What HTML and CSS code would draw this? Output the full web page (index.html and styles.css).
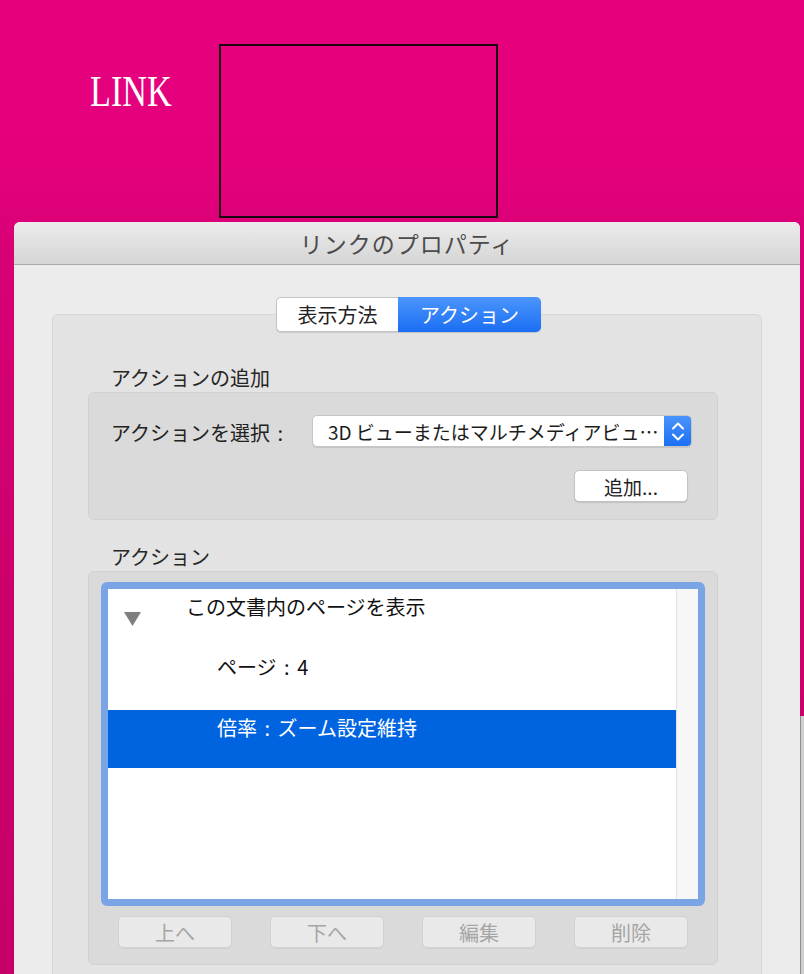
FILE: index.html
```html
<!DOCTYPE html>
<html lang="ja">
<head>
<meta charset="utf-8">
<title>リンクのプロパティ</title>
<link rel="stylesheet" href="styles.css">
</head>
<body>
<div class="stage">
  <div class="link-label">LINK</div>
  <div class="link-rect"></div>
</div>
<div class="side-strip"></div>
<div class="window">
  <div class="titlebar">リンクのプロパティ</div>
  <div class="window-body">
    <div class="panel">
      <div class="tabs">
        <div class="tab">表示方法</div>
        <div class="tab active">アクション</div>
      </div>
      <div class="group-label">アクションの追加</div>
      <div class="group add-group">
        <div class="select-row">
          <div class="select-label">アクションを選択 <span class="colon">:</span></div>
          <div class="select">
            <span class="select-text">3D ビューまたはマルチメディアビュ…</span>
            <span class="stepper">
              <svg width="28" height="32" viewBox="0 0 28 32"><polyline points="9,13.5 14,8.5 19,13.5" fill="none" stroke="#fff" stroke-width="2" stroke-linecap="round" stroke-linejoin="round"/><polyline points="9,19.5 14,24.5 19,19.5" fill="none" stroke="#fff" stroke-width="2" stroke-linecap="round" stroke-linejoin="round"/></svg>
            </span>
          </div>
        </div>
        <div class="add-row"><div class="btn">追加...</div></div>
      </div>
      <div class="group-label second">アクション</div>
      <div class="group list-group">
        <div class="list">
          <div class="list-content">
            <div class="row r1">
              <svg class="disclosure" width="17" height="14" viewBox="0 0 17 14"><polygon points="0,0 17,0 8.5,14" fill="#7f7f7f"/></svg>
              <span class="row-text">この文書内のページを表示</span>
            </div>
            <div class="row r2"><span class="row-text">ページ <span class="colon">:</span> 4</span></div>
            <div class="row r3 selected"><span class="row-text">倍率 <span class="colon">:</span> ズーム設定維持</span></div>
          </div>
          <div class="list-track"></div>
        </div>
        <div class="list-buttons">
          <div class="btn disabled">上へ</div>
          <div class="btn disabled">下へ</div>
          <div class="btn disabled">編集</div>
          <div class="btn disabled">削除</div>
        </div>
      </div>
    </div>
  </div>
</div>
</body>
</html>
```

FILE: styles.css
```css
html, body {
  margin: 0;
  padding: 0;
  width: 804px;
  height: 974px;
  overflow: hidden;
}
body {
  position: relative;
  font-family: "Noto Sans CJK JP", "Noto Sans", sans-serif;
  background: linear-gradient(to bottom, #e6007e 0px, #e4007d 170px, #d80075 250px, #cc006b 600px, #c60068 974px);
}
.stage {
  height: 222px;
  box-sizing: border-box;
  padding: 44px 0 0 90px;
  display: flex;
  align-items: flex-start;
}
.link-label {
  width: 129px;
  margin-top: 25px;
  font-family: "Liberation Serif", serif;
  font-size: 45px;
  line-height: 45px;
  color: #ffffff;
  transform: scaleX(0.76);
  transform-origin: left center;
}
.link-rect {
  width: 279px;
  height: 174px;
  box-sizing: border-box;
  border: 2px solid #1c0612;
}
.side-strip {
  position: absolute;
  left: 800px;
  top: 716px;
  width: 4px;
  height: 258px;
  box-sizing: border-box;
  background: #d0d0d0;
  border-left: 1px solid #8e8e8e;
}
.window {
  margin-left: 14px;
  width: 786px;
  height: 752px;
  background: #ececec;
  border-radius: 6px 6px 0 0;
  overflow: hidden;
}
.titlebar {
  height: 42px;
  border-bottom: 1px solid #aaaaaa;
  background: linear-gradient(to bottom, #ececec, #d5d5d5);
  display: flex;
  align-items: center;
  justify-content: center;
  font-size: 23px;
  letter-spacing: 1px;
  color: #4b4b4b;
}
.window-body {
  padding: 49px 38px 0 38px;
}
.panel {
  background: #e3e3e3;
  border: 1px solid #d6d6d6;
  border-radius: 6px;
  padding: 0 43px 40px 35px;
}
.tabs {
  position: relative;
  margin: -18px -43px 0 -35px;
  padding-left: 3px;
  display: flex;
  justify-content: center;
}
.tab {
  height: 35px;
  box-sizing: border-box;
  display: flex;
  align-items: center;
  justify-content: center;
  font-size: 20px;
  color: #222222;
}
.tab:first-child {
  width: 122px;
  background: #ffffff;
  border: 1px solid #c4c4c4;
  border-right: none;
  border-radius: 5px 0 0 5px;
  box-shadow: 0 1px 1px rgba(0, 0, 0, 0.12);
}
.tab.active {
  width: 143px;
  color: #ffffff;
  background: linear-gradient(to bottom, #4b95fc, #1a6ef3);
  border-radius: 0 5px 5px 0;
  box-shadow: 0 1px 1px rgba(0, 0, 0, 0.15);
}
.group-label {
  margin-top: 34px;
  padding-left: 23px;
  font-size: 20px;
  line-height: 24px;
  color: #262626;
}
.group-label.second {
  margin-top: 25px;
}
.group {
  margin-top: 2px;
  background: #dadada;
  border: 1px solid #d1d1d1;
  border-radius: 6px;
}
.add-group {
  padding: 22px 25px 17px 22px;
}
.select-row {
  display: flex;
  align-items: center;
}
.select-label {
  width: 201px;
  font-size: 20px;
  line-height: 24px;
  color: #222222;
  padding-top: 3px;
}
.select-label .colon {
  margin-left: 3px;
}
.colon {
  margin: 0 3px;
}
.select {
  flex: 1;
  height: 32px;
  box-sizing: border-box;
  display: flex;
  align-items: center;
  background: #ffffff;
  border: 1px solid #c6c6c6;
  border-radius: 5px;
  box-shadow: 0 1px 1px rgba(0, 0, 0, 0.1);
  overflow: hidden;
}
.select-text {
  flex: 1;
  padding-left: 15px;
  font-size: 19px;
  color: #1c1c1c;
  white-space: nowrap;
  overflow: hidden;
}
.stepper {
  width: 28px;
  height: 32px;
  margin: -1px -1px -1px 0;
  background: linear-gradient(to bottom, #4b95fc, #1a6ef3);
  border-radius: 0 5px 5px 0;
  display: flex;
}
.add-row {
  margin-top: 23px;
  padding-right: 4px;
  display: flex;
  justify-content: flex-end;
}
.btn {
  width: 114px;
  height: 32px;
  box-sizing: border-box;
  display: flex;
  align-items: center;
  justify-content: center;
  background: #ffffff;
  border: 1px solid #c3c3c3;
  border-radius: 5px;
  box-shadow: 0 1px 1px rgba(0, 0, 0, 0.12);
  font-size: 19px;
  color: #222222;
}
.btn.disabled {
  background: #e9e9e9;
  border: 1px solid #d2d2d2;
  box-shadow: 0 1px 0 rgba(0, 0, 0, 0.04);
  color: #a5a5a5;
  font-size: 20px;
}
.list-group {
  padding: 10px 12px 16px 12px;
}
.list {
  height: 324px;
  box-sizing: border-box;
  border: 7px solid #79a5e6;
  border-radius: 6px;
  background: #ffffff;
  display: flex;
}
.list-content {
  flex: 1;
}
.list-track {
  width: 22px;
  box-sizing: border-box;
  background: #f7f7f7;
  border-left: 1px solid #e2e2e2;
}
.row {
  display: flex;
  align-items: flex-start;
  box-sizing: border-box;
  font-size: 20px;
  line-height: 24px;
  color: #111111;
}
.row-text {
  margin-top: 6px;
}
.r1 {
  height: 60px;
  padding-left: 16px;
}
.disclosure {
  margin-top: 23px;
}
.r1 .row-text {
  margin-left: 45px;
}
.r2 {
  height: 61px;
  padding-left: 109px;
}
.r3 {
  height: 58px;
  padding-left: 109px;
}
.selected {
  background: #0064e1;
  color: #ffffff;
}
.list-buttons {
  margin-top: 10px;
  padding: 0 17px;
  display: flex;
  justify-content: space-between;
}
```
